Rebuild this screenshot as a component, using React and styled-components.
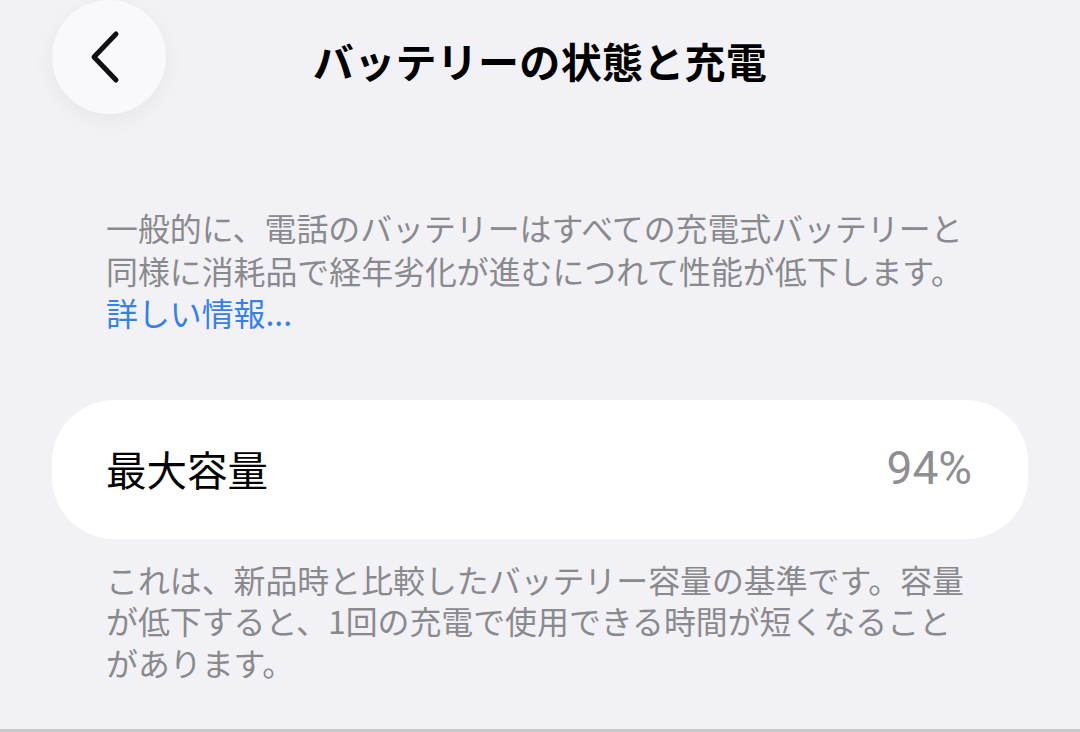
import React from "react";
import styled, { createGlobalStyle } from "styled-components";

const Global = createGlobalStyle`
  html, body { margin: 0; padding: 0; background: #f2f1f6; }
  * { box-sizing: border-box; }
`;

const Page = styled.div`
  width: 1080px;
  height: 732px;
  overflow: hidden;
  background: #f2f1f6;
  border-bottom: 3px solid #c9c9ce;
  font-family: "Noto Sans CJK JP", "Noto Sans", sans-serif;
  display: flex;
  flex-direction: column;
`;

const Header = styled.header`
  display: grid;
  grid-template-columns: 1fr auto 1fr;
  align-items: center;
  height: 114px;
  padding: 0 52px;
`;

const BackButton = styled.button`
  width: 114px;
  height: 114px;
  border-radius: 50%;
  border: none;
  background: #f9f9fc;
  box-shadow: 0 6px 24px rgba(0, 0, 0, 0.05);
  display: flex;
  align-items: center;
  justify-content: center;
  padding: 0;
  padding-right: 6px;
  justify-self: start;
`;

const Title = styled.h1`
  margin: 0;
  margin-top: 6px;
  font-size: 41px;
  font-weight: 700;
  color: #000;
  letter-spacing: 0.3px;
  white-space: nowrap;
`;

const Note = styled.div`
  margin-top: ${(p) => p.$top}px;
  padding: 0 106px;
  font-size: 31.9px;
  line-height: ${(p) => p.$lh}px;
  color: #8a8a8e;
`;

const Line = styled.div`
  white-space: nowrap;
  color: ${(p) => (p.$link ? "#3680e6" : "inherit")};
`;

const Card = styled.div`
  margin: 66px 52px 0;
  height: 139px;
  border-radius: 62px;
  background: #ffffff;
  display: flex;
  align-items: center;
  justify-content: space-between;
  padding: 0 56px 0 54px;
`;

const Label = styled.span`
  font-size: 40.5px;
  color: #000;
  margin-top: -2px;
`;

const Value = styled.span`
  font-family: Roboto, "Liberation Sans", sans-serif;
  font-size: 46px;
  font-weight: 400;
  color: #8e8e93;
  margin-top: -2px;
`;

const Chevron = () => (
  <svg width="36" height="54" viewBox="0 0 36 54" fill="none">
    <path
      d="M28 4 L6 27 L28 50"
      stroke="#111"
      strokeWidth="5"
      strokeLinecap="round"
      strokeLinejoin="round"
    />
  </svg>
);

export default function App() {
  return (
    <>
      <Global />
      <Page>
        <Header>
          <BackButton aria-label="戻る">
            <Chevron />
          </BackButton>
          <Title>バッテリーの状態と充電</Title>
          <span />
        </Header>
        <Note $top={92} $lh={42.5}>
          <Line>一般的に、電話のバッテリーはすべての充電式バッテリーと</Line>
          <Line>同様に消耗品で経年劣化が進むにつれて性能が低下します。</Line>
          <Line $link>詳しい情報...</Line>
        </Note>
        <Card>
          <Label>最大容量</Label>
          <Value>94%</Value>
        </Card>
        <Note $top={20} $lh={41.5}>
          <Line>これは、新品時と比較したバッテリー容量の基準です。容量</Line>
          <Line>が低下すると、1回の充電で使用できる時間が短くなること</Line>
          <Line>があります。</Line>
        </Note>
      </Page>
    </>
  );
}
